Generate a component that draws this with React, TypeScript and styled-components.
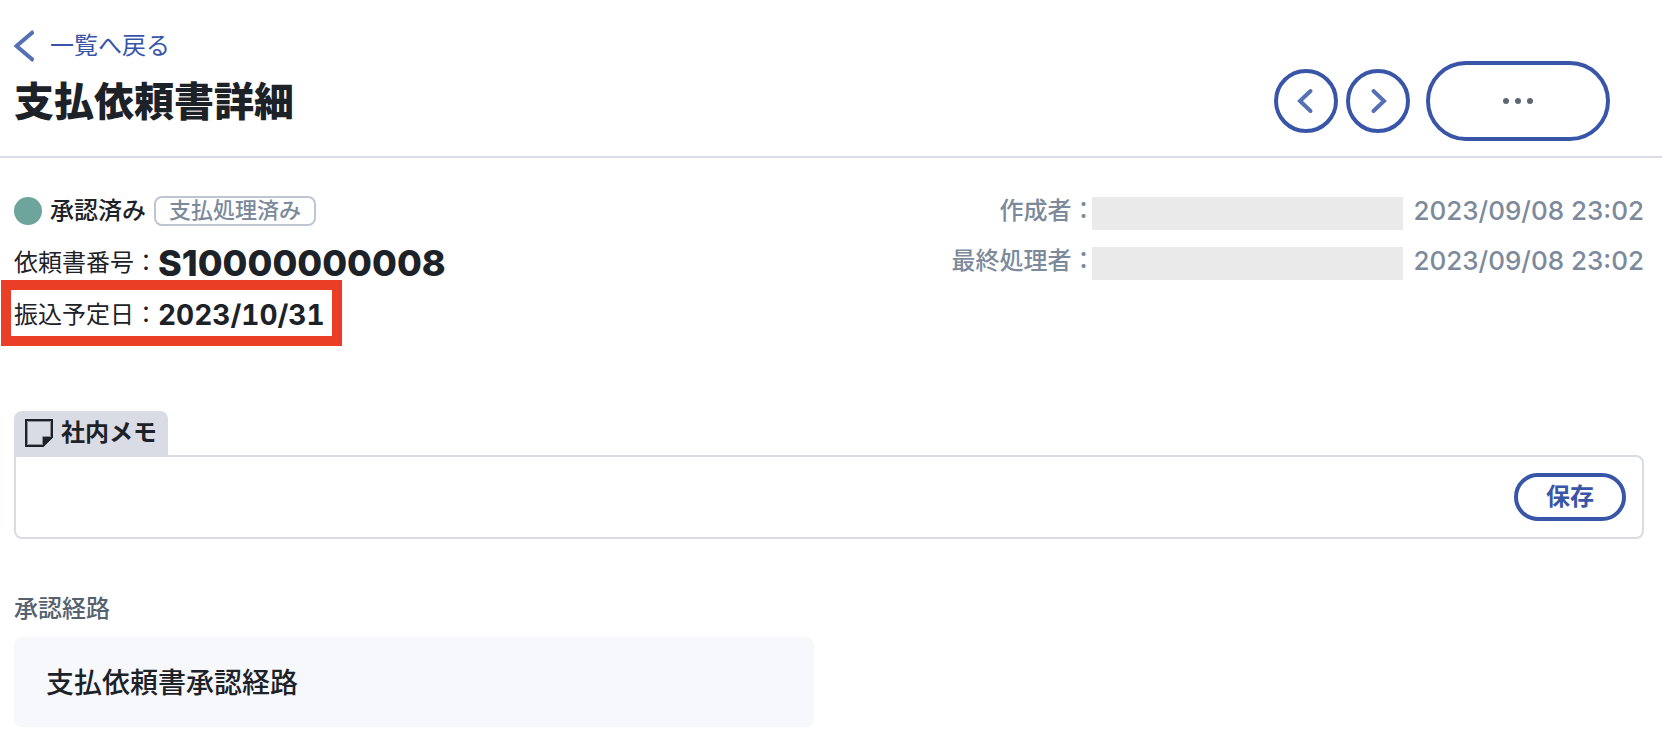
import React from "react";
import styled, { createGlobalStyle } from "styled-components";

const color = {
  blue: "#3855a8",
  text: "#1d2228",
  muted: "#7c8a9b",
  sub: "#56616f",
  line: "#d9dce4",
};

const GlobalStyle = createGlobalStyle`
  *, *::before, *::after { box-sizing: border-box; }
  body {
    margin: 0;
    background: #fff;
    color: ${color.text};
    font-family: Inter, "Noto Sans CJK JP", sans-serif;
    font-size: 24px;
    font-weight: 500;
    line-height: 32px;
  }
`;

const Header = styled.header`
  padding: 30px 52px 16px 14px;
  border-bottom: 2px solid ${color.line};
`;

const BackLink = styled.a`
  display: inline-flex;
  align-items: center;
  gap: 16px;
  height: 32px;
  color: ${color.blue};
  font-weight: 400;
  text-decoration: none;
  vertical-align: top;
`;

const HeaderRow = styled.div`
  display: flex;
  align-items: center;
  justify-content: space-between;
  height: 78px;
`;

const Title = styled.h1`
  margin: 0;
  padding-top: 2px;
  font-size: 40px;
  line-height: 48px;
  font-weight: 900;
`;

const Actions = styled.div`
  display: flex;
  align-items: center;
  gap: 8px;
`;

const OutlineButton = styled.button`
  display: flex;
  align-items: center;
  justify-content: center;
  flex: none;
  padding: 0;
  border: 4px solid ${color.blue};
  background: #fff;
  color: ${color.blue};
  font: inherit;
  font-weight: 700;
  cursor: pointer;
`;

const RoundButton = styled(OutlineButton)`
  width: 64px;
  height: 64px;
  border-radius: 50%;
`;

const MenuButton = styled(OutlineButton)`
  width: 184px;
  height: 80px;
  margin-left: 8px;
  border-radius: 40px;
`;

const SaveButton = styled(OutlineButton)`
  width: 112px;
  height: 48px;
  border-radius: 24px;
`;

const Main = styled.main`
  padding: 27px 18px 24px 14px;
`;

const Summary = styled.section`
  display: flex;
  justify-content: space-between;
  align-items: flex-start;
`;

const InfoRow = styled.div`
  position: relative;
  display: flex;
  align-items: center;
  height: 52px;
  white-space: nowrap;
`;

const StatusRow = styled(InfoRow)`
  gap: 8px;
`;

const StatusDot = styled.span`
  width: 28px;
  height: 28px;
  border-radius: 50%;
  background: #6da49c;
`;

const Badge = styled.span`
  height: 30px;
  padding: 0 13px;
  border: 2px solid #bfc6d3;
  border-radius: 8px;
  color: ${color.muted};
  font-size: 22px;
  line-height: 24px;
`;

const InfoLabel = styled.span`
  font-weight: 400;
`;

const RequestNumber = styled.strong`
  font-size: 36px;
  font-weight: 800;
`;

const TransferDate = styled.strong`
  font-size: 28px;
  font-weight: 700;
  font-variant-numeric: tabular-nums;
`;

const Highlight = styled.span`
  position: absolute;
  top: -9px;
  left: -13px;
  width: 341px;
  height: 66px;
  border: 10px solid #ea3f26;
  pointer-events: none;
`;

const History = styled.div`
  color: ${color.muted};
`;

const HistoryRow = styled.div`
  display: flex;
  align-items: center;
  justify-content: flex-end;
  height: 50px;
  padding-top: 2px;
  white-space: nowrap;
`;

const PersonLabel = styled.span`
  margin-right: -3px;
`;

const PersonMask = styled.span`
  align-self: flex-start;
  width: 311px;
  height: 33px;
  margin: 10px 10px 0 0;
  background: #eaeaea;
`;

const Timestamp = styled.time`
  font-size: 26px;
`;

const Memo = styled.section`
  margin-top: 70px;
`;

const MemoTab = styled.label`
  display: flex;
  align-items: center;
  gap: 8px;
  width: fit-content;
  height: 44px;
  padding: 0 11px;
  border-radius: 8px 8px 0 0;
  background: ${color.line};
  font-weight: 700;
`;

const MemoBox = styled.div`
  display: flex;
  align-items: center;
  gap: 16px;
  height: 84px;
  padding: 0 16px;
  border: 2px solid ${color.line};
  border-radius: 0 8px 8px 8px;
`;

const MemoInput = styled.input`
  flex: 1;
  min-width: 0;
  height: 48px;
  padding: 0;
  border: 0;
  outline: 0;
  background: transparent;
  color: inherit;
  font: inherit;
`;

const RouteTitle = styled.h2`
  margin: 54px 0 12px;
  color: ${color.sub};
  font-size: 24px;
  line-height: 32px;
  font-weight: 500;
`;

const RouteCard = styled.div`
  display: flex;
  align-items: center;
  max-width: 800px;
  height: 90px;
  padding: 2px 32px 0;
  border-radius: 8px;
  background: #f6f8fc;
  font-size: 28px;
`;

const iconStroke = { fill: "none", stroke: "#5670b6" };

const Chevron = ({ right = false }: { right?: boolean }) => (
  <svg width="24" height="26" viewBox="0 0 24 26" {...iconStroke} strokeWidth="4" strokeLinecap="round" aria-hidden="true">
    <path d={right ? "M7.5 3 18 13 7.5 23" : "M16.5 3 6 13l10.5 10"} />
  </svg>
);

const people = [
  { label: "作成者", time: "2023/09/08 23:02" },
  { label: "最終処理者", time: "2023/09/08 23:02" },
];

export default function App() {
  return (
    <>
      <GlobalStyle />
      <Header>
        <BackLink href="#list">
          <svg width="20" height="32" viewBox="0 0 20 32" {...iconStroke} strokeWidth="4" aria-hidden="true">
            <path d="M19.5 1.5 2.5 16l17 14.5" />
          </svg>
          一覧へ戻る
        </BackLink>
        <HeaderRow>
          <Title>支払依頼書詳細</Title>
          <Actions>
            <RoundButton type="button" aria-label="前へ">
              <Chevron />
            </RoundButton>
            <RoundButton type="button" aria-label="次へ">
              <Chevron right />
            </RoundButton>
            <MenuButton type="button" aria-label="メニュー">
              <svg width="32" height="8" viewBox="0 0 32 8" fill="#5b6873" aria-hidden="true">
                <circle cx="4" cy="4" r="3" />
                <circle cx="16" cy="4" r="3" />
                <circle cx="28" cy="4" r="3" />
              </svg>
            </MenuButton>
          </Actions>
        </HeaderRow>
      </Header>
      <Main>
        <Summary>
          <div>
            <StatusRow>
              <StatusDot />
              <span>承認済み</span>
              <Badge>支払処理済み</Badge>
            </StatusRow>
            <InfoRow>
              <InfoLabel>依頼書番号：</InfoLabel>
              <RequestNumber>S10000000008</RequestNumber>
            </InfoRow>
            <InfoRow>
              <InfoLabel>振込予定日：</InfoLabel>
              <TransferDate>2023/10/31</TransferDate>
              <Highlight />
            </InfoRow>
          </div>
          <History>
            {people.map((p) => (
              <HistoryRow key={p.label}>
                <PersonLabel>{p.label}：</PersonLabel>
                <PersonMask />
                <Timestamp>{p.time}</Timestamp>
              </HistoryRow>
            ))}
          </History>
        </Summary>
        <Memo>
          <MemoTab htmlFor="memo">
            <svg width="28" height="28" viewBox="0 0 28 28" aria-hidden="true">
              <path d="M1 1h26v17l-9 9H1z" fill="none" stroke={color.text} strokeWidth="2" />
              <path d="M2.5 2.5h23v15h-8v8h-15z" fill="none" stroke="#8a8e96" />
              <path d="M18 28V18h10z" fill={color.text} />
            </svg>
            社内メモ
          </MemoTab>
          <MemoBox>
            <MemoInput id="memo" type="text" />
            <SaveButton type="button">保存</SaveButton>
          </MemoBox>
        </Memo>
        <section>
          <RouteTitle>承認経路</RouteTitle>
          <RouteCard>支払依頼書承認経路</RouteCard>
        </section>
      </Main>
    </>
  );
}
